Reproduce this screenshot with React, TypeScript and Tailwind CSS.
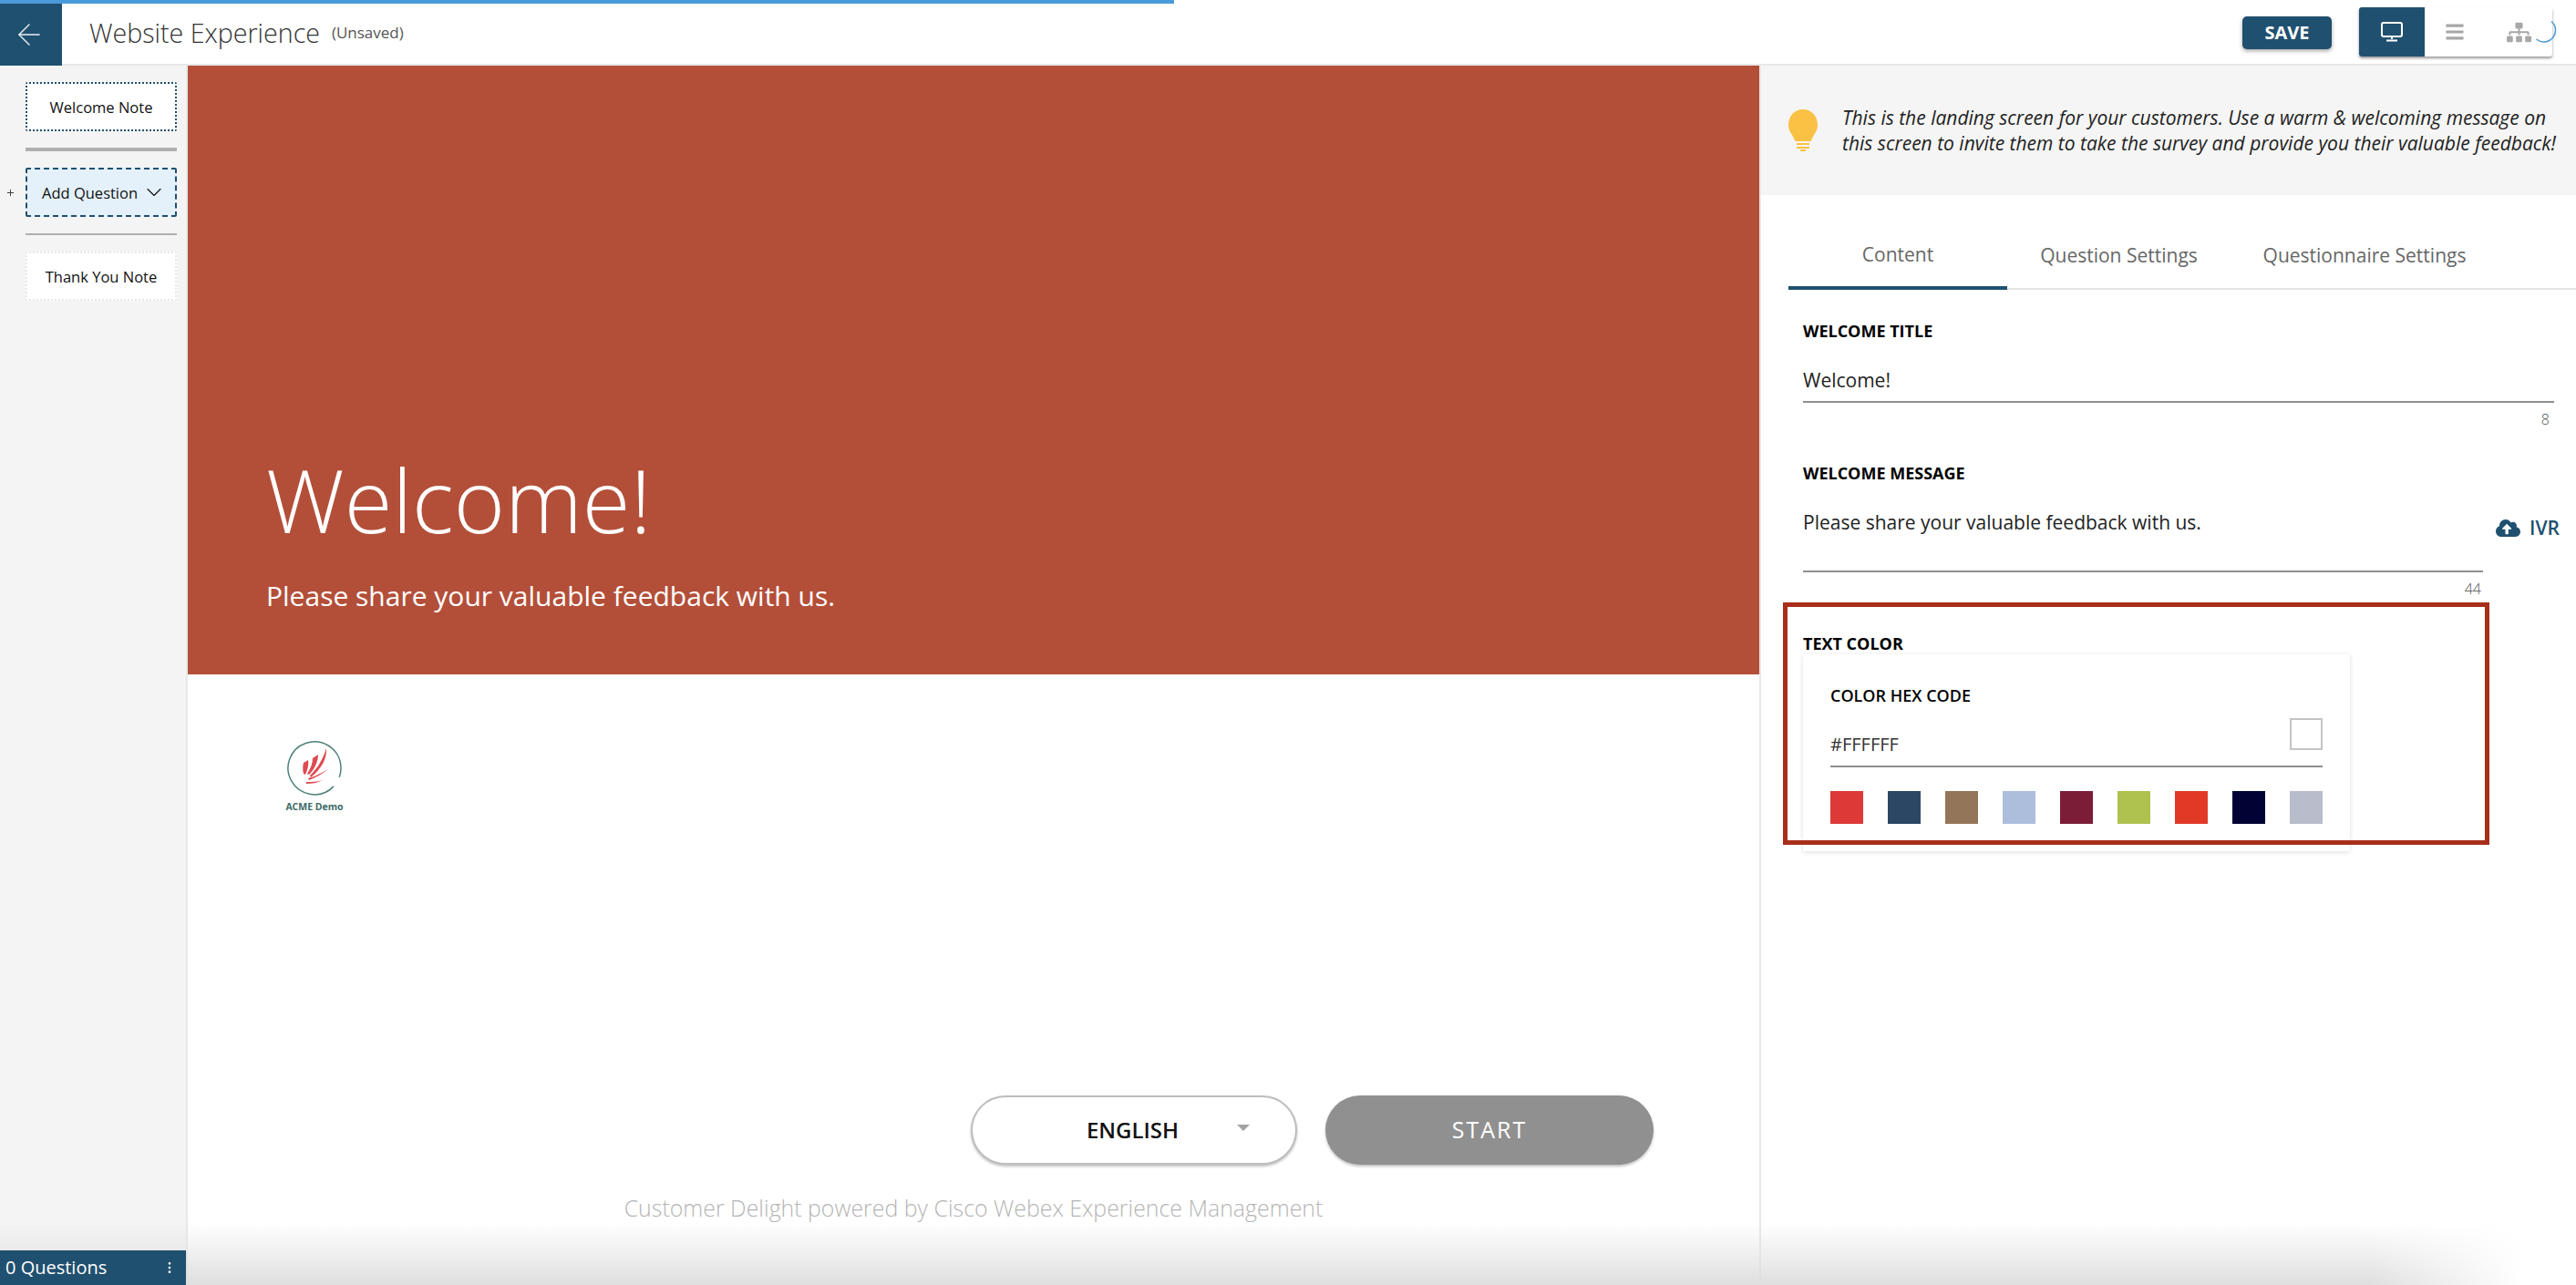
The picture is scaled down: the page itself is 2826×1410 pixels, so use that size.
import React from 'react';
import { ArrowLeft, ChevronDown, EllipsisVertical, Plus } from 'lucide-react';
import { FaBars, FaCloudUploadAlt, FaSitemap } from 'react-icons/fa';

const SWATCHES = [
  'bg-[#dc3937]',
  'bg-[#2b4763]',
  'bg-[#937659]',
  'bg-[#adbddc]',
  'bg-[#7c1d37]',
  'bg-[#afc14f]',
  'bg-[#e03a27]',
  'bg-[#000333]',
  'bg-[#b9bccb]',
];

const Header: React.FC = () => (
  <header className="flex h-[68px] shrink-0 items-stretch border-b-2 border-[#e8e8e8] bg-white">
    <button className="flex h-[68px] w-[68px] items-center justify-center bg-[#20506f] pr-1 text-[#e8eef2]">
      <ArrowLeft size={38} strokeWidth={0.9} />
    </button>
    <div className="ml-[30px] flex items-center pb-[2px]">
      <h1 className="text-[28.6px] font-light leading-none text-[#333]">Website Experience</h1>
      <span className="ml-[13px] text-[17px] text-[#555]">(Unsaved)</span>
    </div>
    <div className="ml-auto flex items-start pr-[26px]">
      <button className="mt-[14px] h-9 w-[98px] rounded-[5px] bg-[#20506f] text-[20px] font-bold text-white shadow-[0_2px_4px_rgba(0,0,0,0.35)]">
        SAVE
      </button>
      <div className="relative ml-[30px] mt-1 flex h-[54px] w-[212px] rounded-[3px] bg-white shadow-[0_2px_3px_rgba(0,0,0,0.4)]">
        <div className="flex w-[72px] items-center justify-center rounded-l-[3px] bg-[#20506f]">
          <svg width="24" height="22" viewBox="0 0 24 22" fill="none">
            <rect x="1" y="1" width="22" height="15" rx="2" stroke="white" strokeWidth="2" />
            <path d="M12 16v3M6 20.5h12" stroke="white" strokeWidth="2" />
          </svg>
        </div>
        <div className="flex w-[66px] items-center justify-center text-[#a8a8a8]">
          <FaBars size={22} />
        </div>
        <div className="flex w-[74px] items-center justify-center text-[#a8a8a8]">
          <FaSitemap size={27} />
        </div>
        {/* loading spinner sits over the corner of the toggle */}
        <svg className="absolute right-[-7px] top-[14px]" width="26" height="26" viewBox="0 0 26 26" fill="none">
          <path d="M18 1.5A12 12 0 0 1 1.5 21" stroke="#4a9ad9" strokeWidth="1.5" />
        </svg>
      </div>
    </div>
  </header>
);

const Sidebar: React.FC = () => (
  <aside className="relative flex w-[206px] shrink-0 flex-col border-r-2 border-[#e8e8e8] bg-[#f4f4f4] pl-[28px] pr-[10px] pt-[18px]">
    <div className="flex h-[54px] items-center justify-center rounded-[2px] border-2 border-dotted border-[#20506f] bg-white pt-[2px] text-[16.5px] text-[#111]">
      Welcome Note
    </div>
    <div className="mt-[18px] h-1 bg-[#b0b0b0]" />
    <div className="relative mt-[18px] flex h-[54px] items-center gap-1 rounded-[2px] border-2 border-dashed border-[#20506f] bg-[#e4f1fb] pl-4 text-[16.5px] text-[#111]">
      <Plus size={11} strokeWidth={2} className="absolute left-[-24px] text-[#333]" />
      <span className="pt-[2px]">Add Question</span>
      <ChevronDown size={28} strokeWidth={1} />
    </div>
    <div className="mt-[18px] h-0.5 bg-[#b0b0b0]" />
    <div className="mt-[18px] flex h-[54px] items-center justify-center rounded-[2px] border-2 border-dotted border-[#e8e8e8] bg-white pt-[2px] text-[16.5px] text-[#111]">
      Thank You Note
    </div>
    <div className="absolute bottom-0 left-0 z-20 flex h-[38px] w-[204px] items-center justify-between bg-[#20506f] pl-[6px] pr-[10px] text-[20px] text-white">
      0 Questions
      <EllipsisVertical size={16} strokeWidth={2} />
    </div>
  </aside>
);

const Logo: React.FC = () => (
  <div className="flex w-[66px] flex-col items-center">
    <svg width="62" height="62" viewBox="0 0 62 62" fill="none">
      <path d="M46 7A29 29 0 1 0 60 31 29 29 0 0 0 46 7" stroke="#4d8277" strokeWidth="1.5" strokeDasharray="130 12 40" />
      <path d="M44 10c1 12-6 23-17 32l-1-2c8-8 14-17 18-30Z" fill="#dc4b50" />
      <path d="M35 17c0 8-4 16-10 22l-2-1c4-6 6-12 6-17Z" fill="#dc4b50" />
      <path d="M24 23c1 6-1 11-3 16l-2-1c-1-4-1-8 0-12Z" fill="#dc4b50" />
      <path d="M46 33c-6 5-13 9-21 12l-1-2c8-2 15-6 22-10Z" fill="#dc4b50" />
      <path d="M40 45c-6 3-12 4-18 4v-2c6 0 12 0 18-2Z" fill="#dc4b50" />
    </svg>
    <span className="mt-[7px] whitespace-nowrap text-[10.5px] font-bold leading-none text-[#3d6b66]">ACME Demo</span>
  </div>
);

const Preview: React.FC = () => (
  <main className="flex w-[1724px] shrink-0 flex-col bg-white">
    <section className="h-[668px] shrink-0 bg-[#b34f39] pl-[86px] pt-[428px] text-white">
      <h2 className="text-[96px] font-light leading-none">Welcome!</h2>
      <p className="mt-[38px] text-[30px] leading-[40px]">Please share your valuable feedback with us.</p>
    </section>
    <section className="flex flex-1 flex-col">
      <div className="pl-[106px] pt-[71px]">
        <Logo />
      </div>
      <div className="mt-auto flex justify-end gap-[31px] pr-[116px]">
        <div className="relative flex h-[76px] w-[358px] items-center justify-center rounded-full border-2 border-[#bdbdbd] bg-white pr-[3px] text-[24px] font-semibold text-[#111] shadow-[0_2px_3px_rgba(0,0,0,0.25)]">
          ENGLISH
          <span className="absolute left-[290px] top-[30px] h-0 w-0 border-x-[7px] border-t-[7px] border-x-transparent border-t-[#a3a3a3]" />
        </div>
        <button className="h-[76px] w-[360px] rounded-full bg-[#909090] text-[25px] tracking-[2px] text-white shadow-[0_2px_3px_rgba(0,0,0,0.25)]">
          START
        </button>
      </div>
      <p className="mb-[68px] mt-[30px] text-center text-[24.9px] font-light leading-[34px] text-[#b5b5b5]">
        Customer Delight powered by Cisco Webex Experience Management
      </p>
    </section>
  </main>
);

const SettingsPanel: React.FC = () => (
  <div className="relative flex flex-1 flex-col border-l-2 border-[#e8e8e8] bg-white">
    <div className="flex h-[142px] shrink-0 items-center bg-[#f5f5f5] pl-[30px]">
      <svg width="32" height="46" viewBox="0 0 32 46" className="shrink-0">
        <path d="M16 0C7 0 0 7 0 17c0 7 4 10 6 15 1 2 1 3 2 3h16c1 0 1-1 2-3 2-5 6-8 6-15C32 7 25 0 16 0Z" fill="#fac144" />
        <path d="M9 37h14v2H9zM9 41h14v2H9zM13 44h6v2h-6z" fill="#fac144" />
      </svg>
      <p className="ml-[27px] whitespace-nowrap text-[21px] italic leading-[28px] text-[#222]">
        This is the landing screen for your customers. Use a warm &amp; welcoming message on
        <br />
        this screen to invite them to take the survey and provide you their valuable feedback!
      </p>
    </div>

    <div className="ml-[30px] mt-[30px] flex h-[74px] shrink-0 border-b-2 border-[#e4e4e4] text-[21px] text-[#666]">
      <div className="-mb-0.5 flex w-[240px] items-center justify-center border-b-4 border-[#20506f] pt-[2px]">Content</div>
      <div className="flex w-[245px] items-center justify-center pt-[2px]">Question Settings</div>
      <div className="flex w-[294px] items-center justify-center pt-[2px]">Questionnaire Settings</div>
    </div>

    <div className="pl-[46px] pt-[33px]">
      <label className="block text-[18px] font-bold leading-[24px] text-black">WELCOME TITLE</label>
      <div className="mr-[24px] mt-[28px] h-[39px] border-b-2 border-[#8f8f8f] text-[21px] leading-[28px] text-[#222]">Welcome!</div>
      <div className="mr-[29px] mt-[8px] text-right text-[16px] font-light leading-[20px] text-[#555]">8</div>

      <label className="mt-[37px] block text-[18px] font-bold leading-[24px] text-black">WELCOME MESSAGE</label>
      <div className="relative mr-[102px] mt-[28px] h-[69px] border-b-2 border-[#8f8f8f] text-[21px] leading-[28px] text-[#222]">
        Please share your valuable feedback with us.
        <div className="absolute left-[760px] top-[6px] flex items-center gap-[10px] font-semibold text-[#20506f]">
          <FaCloudUploadAlt size={27} />
          IVR
        </div>
      </div>
      <div className="mr-[104px] mt-[8px] text-right text-[16px] font-light leading-[20px] text-[#555]">44</div>

      <label className="mt-[38px] block text-[18px] font-bold leading-[24px] text-black">TEXT COLOR</label>
      <div className="h-[216px] w-[600px] bg-white px-[30px] pt-[33px] shadow-[0_1px_5px_rgba(0,0,0,0.14)]">
        <div className="text-[18px] font-semibold leading-[24px] text-black">COLOR HEX CODE</div>
        <div className="relative mt-2 h-[59px] border-b-2 border-[#8f8f8f] pt-[20px] text-[20px] leading-[28px] text-[#333]">
          #FFFFFF
          <span className="absolute right-0 top-[5px] h-[35px] w-[36px] border-2 border-[#c4c4c4] bg-white" />
        </div>
        <div className="mt-[26px] flex justify-between">
          {SWATCHES.map((c) => (
            <span key={c} className={`h-[36px] w-[36px] ${c}`} />
          ))}
        </div>
      </div>
    </div>

    {/* annotation drawn over the screenshot */}
    <div className="pointer-events-none absolute left-[24px] top-[589px] h-[266px] w-[775px] border-[5px] border-[#a82e1a]" />
  </div>
);

export default function App() {
  return (
    <div className="relative flex h-[1410px] w-[2826px] flex-col overflow-hidden bg-white font-['Open_Sans',sans-serif]">
      <div className="h-1 shrink-0 bg-white">
        <div className="h-1 w-[1288px] bg-[#4a9ad9]" />
      </div>
      <Header />
      <div className="flex min-h-0 flex-1">
        <Sidebar />
        <Preview />
        <SettingsPanel />
      </div>
      {/* soft shadow along the bottom edge of the page */}
      <div className="pointer-events-none absolute bottom-0 left-0 z-10 h-[68px] w-full bg-gradient-to-b from-transparent to-[#dfdfdf] [mask-image:linear-gradient(to_right,black_92%,transparent_98%)]" />
    </div>
  );
}
